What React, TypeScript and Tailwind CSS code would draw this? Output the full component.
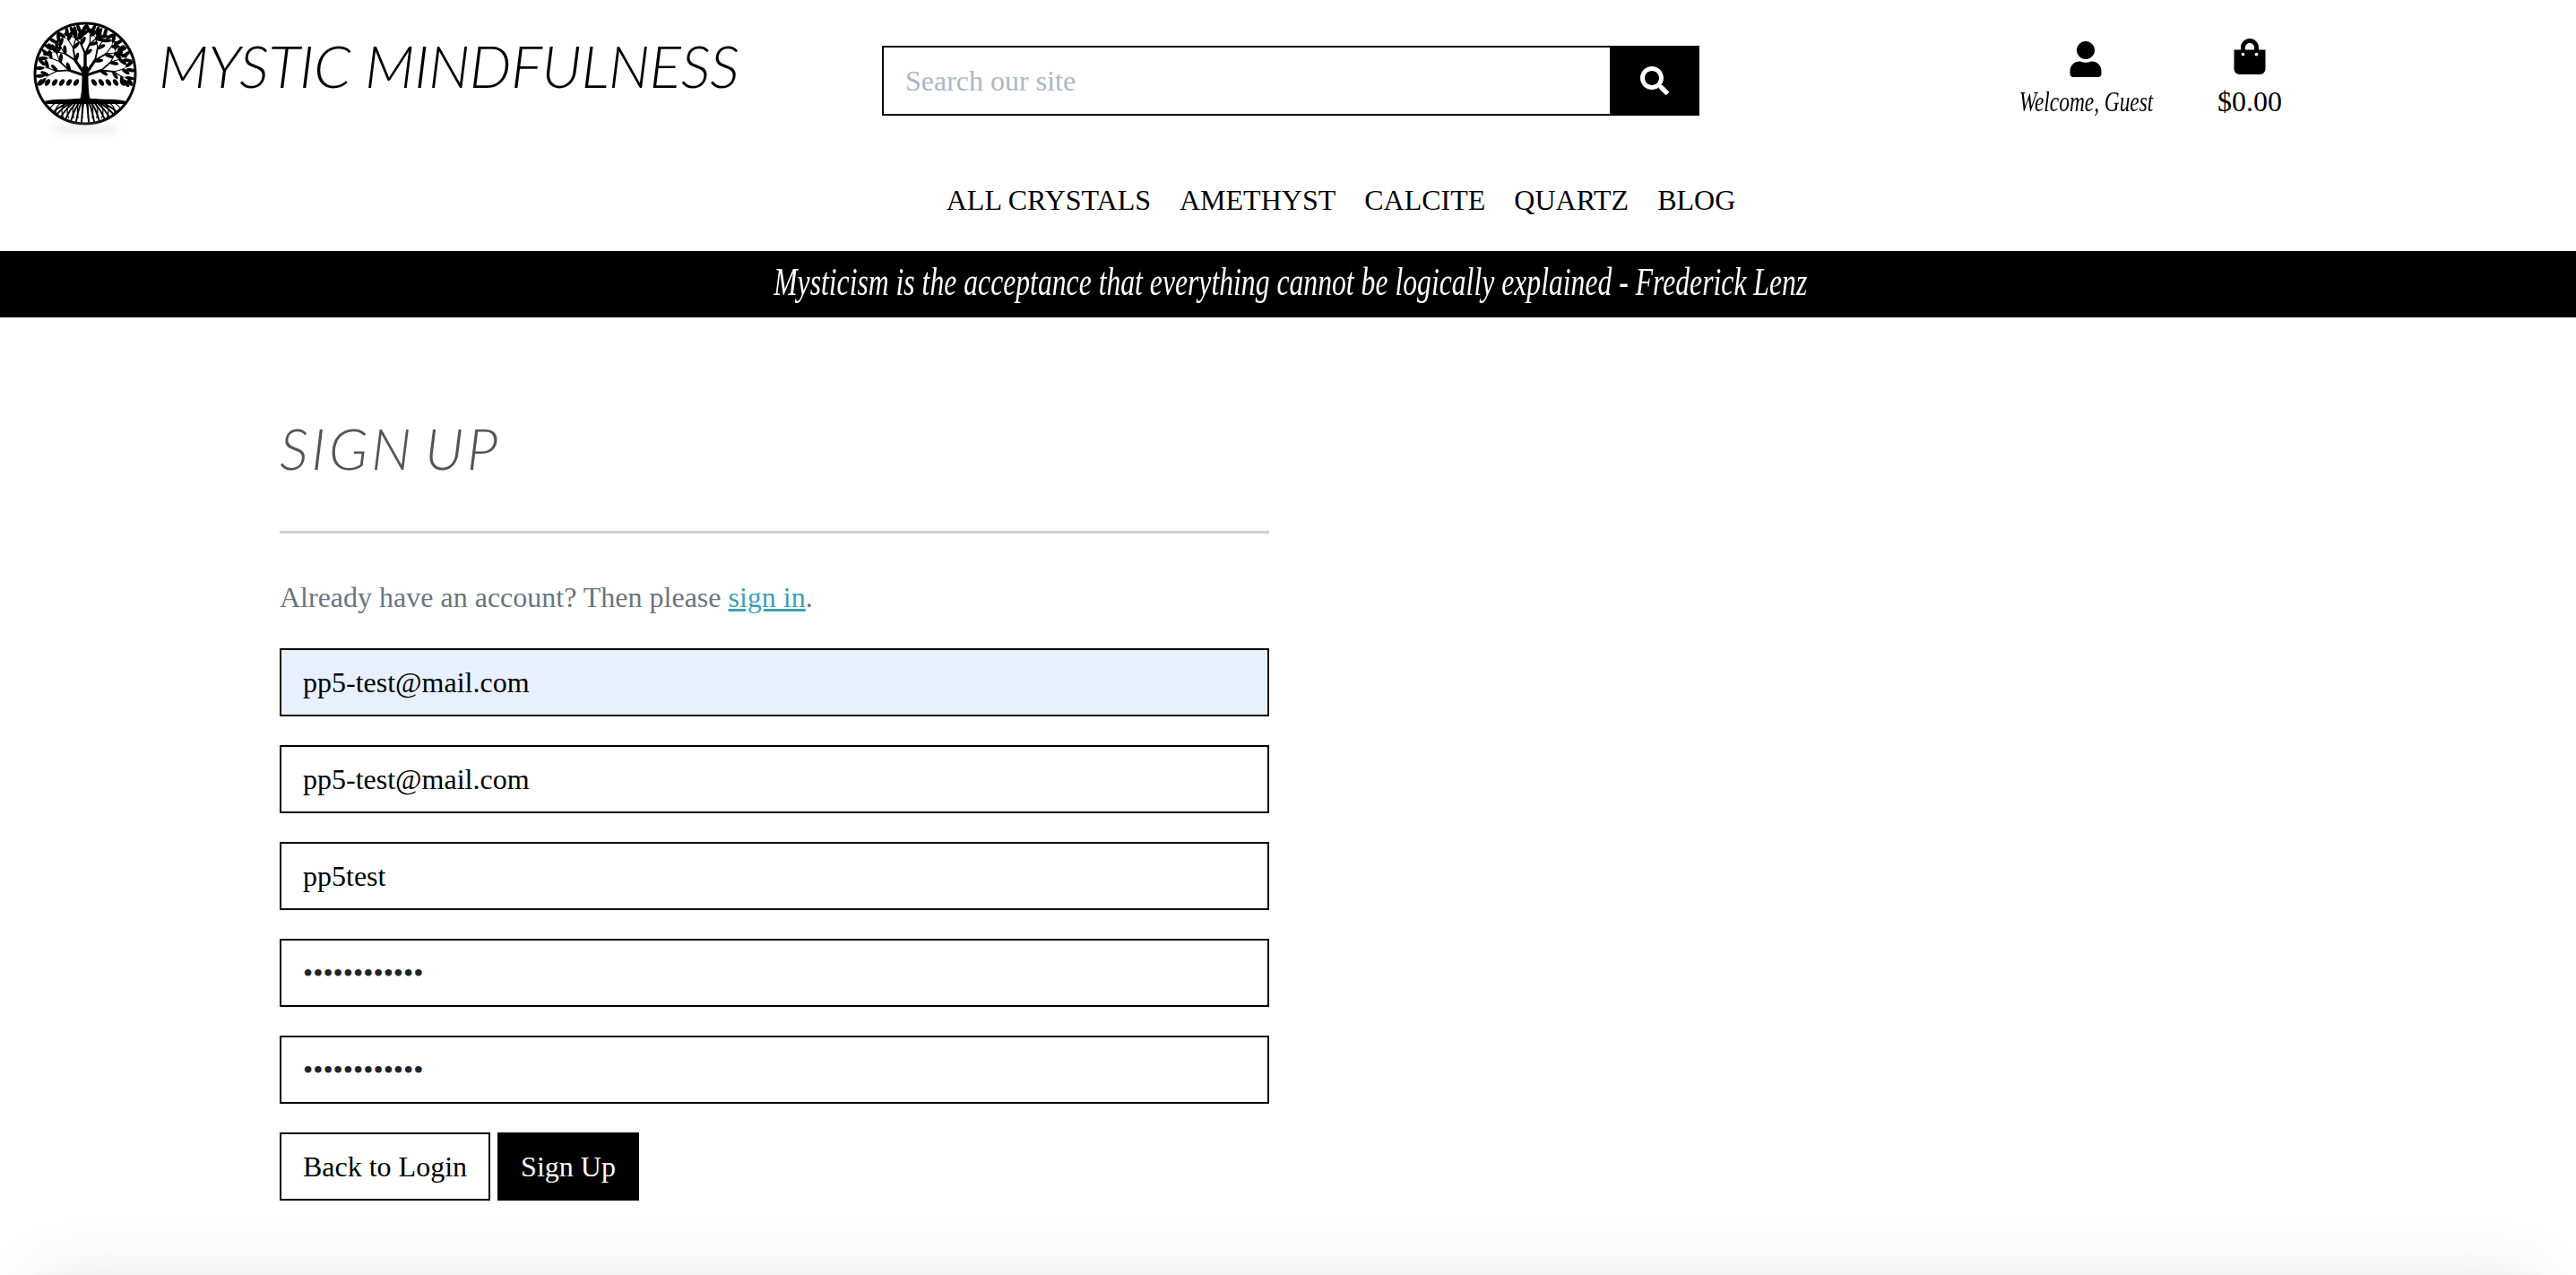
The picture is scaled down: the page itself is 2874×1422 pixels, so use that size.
import React from 'react';
import { FaShoppingBag, FaUser, FaSearch } from 'react-icons/fa';

type Seg = { x1: number; y1: number; x2: number; y2: number; w: number };
type Leaf = { x: number; y: number; a: number };

// small fractal for the tree in the logo, same result on every render
function grow(x: number, y: number, a: number, len: number, w: number, depth: number, segs: Seg[], leaves: Leaf[]) {
  const x2 = x + Math.cos(a) * len;
  const y2 = y + Math.sin(a) * len;
  segs.push({ x1: x, y1: y, x2, y2, w });
  if (depth === 0) {
    leaves.push({ x: x2, y: y2, a: (a * 180) / Math.PI });
    return;
  }
  leaves.push({ x: x2 + Math.cos(a + 1.1) * 4, y: y2 + Math.sin(a + 1.1) * 4, a: ((a + 0.9) * 180) / Math.PI });
  grow(x2, y2, a - 0.4, len * 0.78, w * 0.6, depth - 1, segs, leaves);
  grow(x2, y2, a + 0.44, len * 0.78, w * 0.6, depth - 1, segs, leaves);
}

function TreeLogo() {
  const segs: Seg[] = [];
  const leaves: Leaf[] = [];
  const up = -Math.PI / 2;
  grow(59, 62, up - 1.25, 18, 3, 3, segs, leaves);
  grow(59, 60, up - 0.6, 18, 3.2, 3, segs, leaves);
  grow(60, 54, up, 16, 3.4, 3, segs, leaves);
  grow(61, 60, up + 0.6, 18, 3.2, 3, segs, leaves);
  grow(61, 62, up + 1.25, 18, 3, 3, segs, leaves);
  const lowLeaves = [10, 18, 26, 34, 42, 50, 70, 78, 86, 94, 102, 110];
  const roots = [-46, -38, -30, -23, -16, -10, -4, 4, 10, 16, 23, 30, 38, 46];
  return (
    <svg viewBox="0 0 120 120" className="w-[120px] h-[120px] shrink-0">
      <defs>
        <clipPath id="disc">
          <circle cx="60" cy="60" r="56" />
        </clipPath>
        <clipPath id="canopy">
          <rect x="0" y="0" width="120" height="75" />
        </clipPath>
      </defs>
      <g clipPath="url(#disc)">
        <g clipPath="url(#canopy)">
          {segs.map((s, i) => (
            <line key={i} x1={s.x1} y1={s.y1} x2={s.x2} y2={s.y2} stroke="#000" strokeWidth={s.w} strokeLinecap="round" />
          ))}
          {leaves.map((l, i) => (
            <ellipse key={i} cx={l.x} cy={l.y} rx="5" ry="2" fill="#000" transform={`rotate(${l.a} ${l.x} ${l.y})`} />
          ))}
          {lowLeaves.map((x) => (
            <ellipse key={x} cx={x} cy={70} rx="2.4" ry="4.2" fill="#000" transform={`rotate(${x < 60 ? 35 : -35} ${x} 70)`} />
          ))}
        </g>
        <path d="M54 90 C57 80 56 70 57 52 L63 52 C64 70 63 80 66 90 Z" fill="#000" />
        <path d="M14 91 C30 87 45 90 60 87 C75 90 90 87 106 91 L104 94 L16 94 Z" fill="#000" />
        {roots.map((r) => (
          <path key={r} d={`M${60 + r * 0.25} 89 Q${60 + r * 0.7} 96 ${60 + r * 1.05} 116`} fill="none" stroke="#000" strokeWidth="1.9" />
        ))}
        {roots.map((r) => (
          <path key={`b${r}`} d={`M${60 + r * 0.6} 91 Q${60 + r} 97 ${60 + r * 0.8} 110`} fill="none" stroke="#000" strokeWidth="1.2" />
        ))}
      </g>
      <circle cx="60" cy="60" r="56" fill="none" stroke="#000" strokeWidth="3" />
    </svg>
  );
}

function Field({ value, type = 'text', filled = false }: { value: string; type?: string; filled?: boolean }) {
  return (
    <input
      readOnly
      type={type}
      value={value}
      className={`block w-full h-[76px] mb-[32px] px-[24px] border-2 border-black outline-none text-[32px] font-['Liberation_Serif',serif] ${
        type === 'password' ? 'text-[#212529]' : 'text-black'
      } ${filled ? 'bg-[#e8f0fe]' : 'bg-white'}`}
    />
  );
}

export default function App() {
  return (
    <div className="h-[1422px] overflow-hidden bg-white text-black font-['Liberation_Serif',serif] text-[32px]">
      {/* Top header */}
      <header className="flex h-[196px]">
        <div className="w-[984px] flex items-start pl-[35px] pt-[22px]">
          <div className="relative">
            <TreeLogo />
            <div className="absolute left-[25px] right-[25px] top-[118px] h-[8px] rounded-full bg-gray-300/50 blur-[5px]" />
          </div>
          <span className="ml-[22px] mt-[13px] text-[66px] leading-[76px] italic font-['Lato',sans-serif] font-light tracking-[-0.5px] whitespace-nowrap">
            MYSTIC MINDFULNESS
          </span>
        </div>
        <div className="w-[912px] pt-[51px]">
          <div className="flex h-[78px]">
            <input
              readOnly
              placeholder="Search our site"
              className="flex-1 min-w-0 border-2 border-r-0 border-black px-[24px] outline-none text-[32px] placeholder:text-[#aab7c4] font-['Liberation_Serif',serif]"
            />
            <div className="w-[100px] bg-black flex items-center justify-center text-white">
              <FaSearch className="w-[32px] h-[32px]" />
            </div>
          </div>
        </div>
        <div className="flex pl-[356px] pt-[43px]">
          <div className="w-[150px] flex flex-col items-center">
            <FaUser className="mt-[3px] w-[40px] h-[40px]" />
            <span className="mt-[9px] text-[32px] leading-[36px] italic scale-x-[0.73] whitespace-nowrap">Welcome, Guest</span>
          </div>
          <div className="ml-[72px] w-[72px] flex flex-col items-center">
            <FaShoppingBag className="w-[36px] h-[40px]" />
            <span className="mt-[6px] leading-[48px]">$0.00</span>
          </div>
        </div>
      </header>

      {/* Categories */}
      <nav className="flex justify-center gap-[32px] h-[84px] pl-[118px] pt-[3px] leading-[48px] whitespace-nowrap">
        <span>ALL CRYSTALS</span>
        <span>AMETHYST</span>
        <span>CALCITE</span>
        <span>QUARTZ</span>
        <span>BLOG</span>
      </nav>

      {/* Quote banner */}
      <div className="h-[74px] pb-[5px] pl-[5px] bg-black text-white flex items-center justify-center overflow-hidden">
        <span className="text-[44px] italic scale-x-[0.72] whitespace-nowrap">
          Mysticism is the acceptance that everything cannot be logically explained - Frederick Lenz
        </span>
      </div>

      {/* Sign up form */}
      <main className="w-[1104px] ml-[312px] pt-[108px]">
        <h2 className="text-[64px] leading-[76px] italic font-['Lato',sans-serif] font-light text-[#555] tracking-[3.5px] [word-spacing:-8px]">SIGN UP</h2>
        <hr className="mt-[54px] border-0 h-[3px] bg-[#cfcfcf]" />
        <p className="mt-[47px] mb-[33px] leading-[48px] text-[#6c757d]">
          Already have an account? Then please <a className="underline text-[#3f9fb5]">sign in</a>.
        </p>
        <Field value="pp5-test@mail.com" filled />
        <Field value="pp5-test@mail.com" />
        <Field value="pp5test" />
        <Field value="passwordpass" type="password" />
        <Field value="passwordpass" type="password" />
        <div className="flex gap-[8px]">
          <button className="h-[76px] w-[235px] border-2 border-black bg-white">Back to Login</button>
          <button className="h-[76px] w-[158px] bg-black text-white">Sign Up</button>
        </div>
      </main>

      <footer className="mt-[82px] mx-[40px] h-[100px] bg-[#f3f3f3] shadow-[0_0_70px_rgba(0,0,0,0.1)]" />
    </div>
  );
}
